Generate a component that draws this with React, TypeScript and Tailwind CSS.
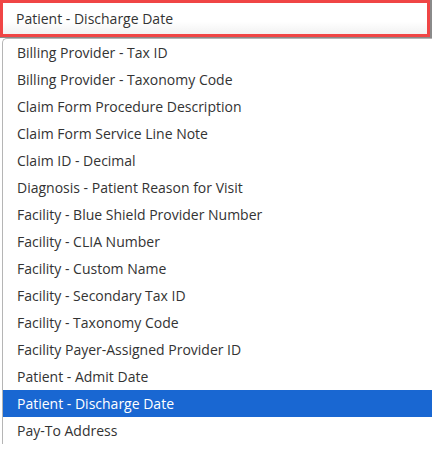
import React from "react";

const options = [
  "Billing Provider - Tax ID",
  "Billing Provider - Taxonomy Code",
  "Claim Form Procedure Description",
  "Claim Form Service Line Note",
  "Claim ID - Decimal",
  "Diagnosis - Patient Reason for Visit",
  "Facility - Blue Shield Provider Number",
  "Facility - CLIA Number",
  "Facility - Custom Name",
  "Facility - Secondary Tax ID",
  "Facility - Taxonomy Code",
  "Facility Payer-Assigned Provider ID",
  "Patient - Admit Date",
  "Patient - Discharge Date",
  "Pay-To Address",
];

const selected = "Patient - Discharge Date";

export default function App() {
  return (
    <div
      className="w-[432px] h-[451px] overflow-hidden bg-white text-[14px] text-[#333]"
      style={{ fontFamily: '"Open Sans", "Liberation Sans", sans-serif' }}
    >
      {/* select box, highlighted */}
      <div className="w-[432px] h-[38px] border-r-2 border-b border-[#8a8a8a]">
        <div className="h-[37px] w-[430px] border-[3px] border-[#f04545] bg-gradient-to-b from-white from-60% to-[#f2f2f2] flex items-center pl-[13px]">
          Patient - Discharge Date
        </div>
      </div>

      {/* open list */}
      <ul className="ml-[2px] border-l border-t border-[#b5b5b5] rounded-tl-[5px] bg-white">
        {options.map((o) => (
          <li
            key={o}
            className={
              "h-[27px] flex items-center pl-[14px] " +
              (o === selected ? "bg-[#1967d2] text-white" : "")
            }
          >
            {o}
          </li>
        ))}
      </ul>
    </div>
  );
}
